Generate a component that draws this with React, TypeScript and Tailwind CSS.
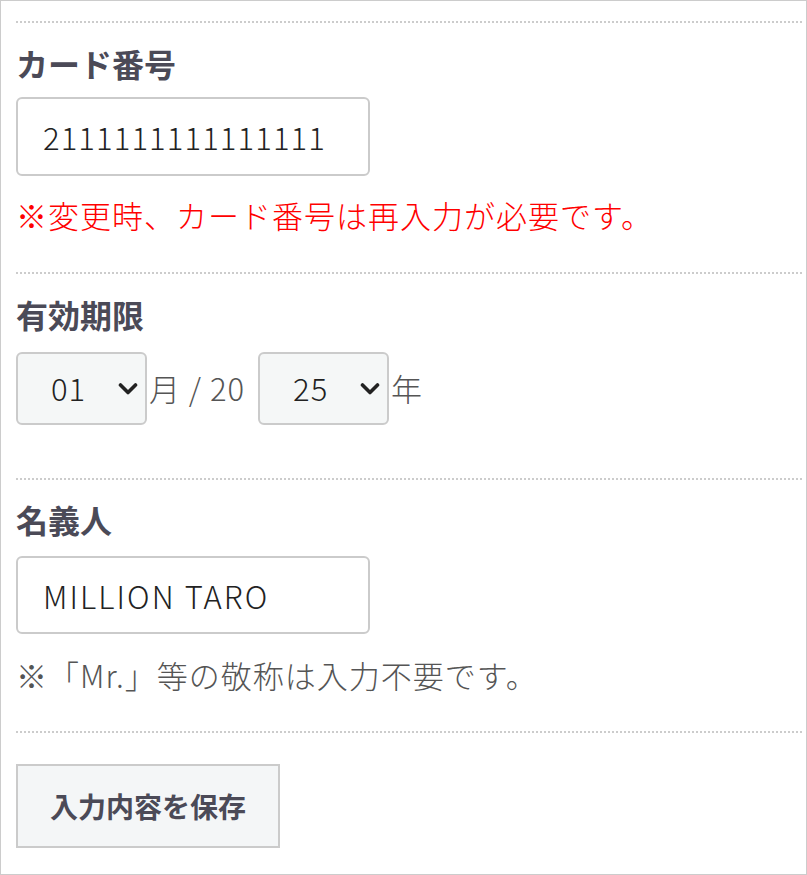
import React from 'react';

const font = "font-['Noto_Sans_CJK_JP','Noto_Sans',sans-serif]";

function Dotted({ className = '' }: { className?: string }) {
  return (
    <div
      className={`h-[2px] w-full bg-[linear-gradient(90deg,#cccccc_50%,transparent_50%)] bg-[length:4px_2px] bg-repeat-x ${className}`}
    />
  );
}

function Chevron() {
  return (
    <svg width="20" height="13" viewBox="0 0 20 13" className="pointer-events-none absolute right-[9px] top-1/2 -translate-y-1/2">
      <path d="M2.5 2.5 L10 10 L17.5 2.5" fill="none" stroke="#222" strokeWidth="3.6" strokeLinecap="round" strokeLinejoin="round" />
    </svg>
  );
}

function Select({ value, options }: { value: string; options: string[] }) {
  return (
    <div className="relative h-[73px] w-[131px]">
      <select
        defaultValue={value}
        className="h-full w-full appearance-none rounded-md border-2 border-[#cbcbcb] bg-[#f5f7f7] pl-[33px] text-[31px] font-light tracking-[1px] text-[#222] outline-none"
      >
        {options.map((o) => (
          <option key={o} value={o}>
            {o}
          </option>
        ))}
      </select>
      <Chevron />
    </div>
  );
}

export default function App() {
  const months = ['01', '02', '03', '04', '05', '06', '07', '08', '09', '10', '11', '12'];
  const years = ['25', '26', '27', '28', '29', '30', '31', '32', '33', '34', '35'];

  return (
    <div className={`${font} box-border h-[875px] w-[807px] border border-[#cccccc] bg-white pl-[15px] pr-[4px] pt-[20px]`}>
      {/* カード番号 */}
      <Dotted />
      <div className="mt-[16px] text-[32px] font-bold leading-[48px] text-[#4b4a57]">カード番号</div>
      <input
        defaultValue="2111111111111111"
        className="mt-[10px] block h-[79px] w-[354px] rounded-md border-2 border-[#cbcbcb] bg-white px-[25px] text-[31px] font-light tracking-[1.1px] text-[#222] outline-none"
      />
      <p className="mt-[16px] text-[31px] font-light leading-[45px] tracking-[1px] text-[#ff0000]">
        ※変更時、カード番号は再入力が必要です。
      </p>

      {/* 有効期限 */}
      <Dotted className="mt-[35px]" />
      <div className="mt-[16px] text-[32px] font-bold leading-[48px] text-[#4b4a57]">有効期限</div>
      <div className="mt-[14px] flex items-center text-[31px] font-light tracking-[1px] text-[#555]">
        <Select value="01" options={months} />
        <span className="ml-[2px]">月 / 20</span>
        <div className="ml-[13px]">
          <Select value="25" options={years} />
        </div>
        <span className="ml-[2px]">年</span>
      </div>

      {/* 名義人 */}
      <Dotted className="mt-[53px]" />
      <div className="mt-[15px] text-[32px] font-bold leading-[48px] text-[#4b4a57]">名義人</div>
      <input
        defaultValue="MILLION TARO"
        className="mt-[13px] block h-[78px] w-[354px] rounded-md border-2 border-[#cbcbcb] bg-white px-[25px] text-[31px] font-light tracking-[2.1px] text-[#222] outline-none"
      />
      <p className="mt-[18px] text-[31px] font-light leading-[45px] tracking-[1px] text-[#555]">
        ※「Mr.」等の敬称は入力不要です。
      </p>

      <Dotted className="mt-[34px]" />
      <button className="mt-[31px] h-[84px] w-[264px] border-2 border-[#cbcbcb] bg-[#f4f6f7] text-[28px] font-bold text-[#4b4a57]">
        入力内容を保存
      </button>
    </div>
  );
}
